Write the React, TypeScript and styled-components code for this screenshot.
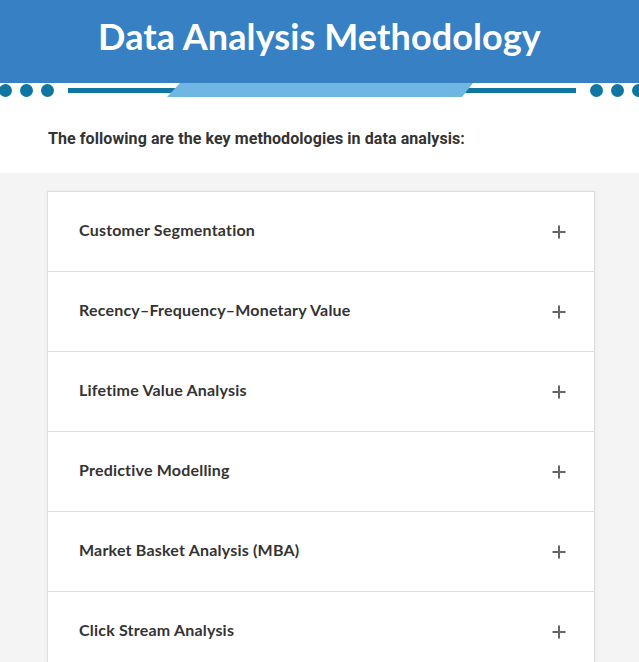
import * as React from "react";
import styled, { createGlobalStyle } from "styled-components";

const GlobalStyle = createGlobalStyle`
  html, body {
    margin: 0;
    padding: 0;
    background: #f4f4f4;
  }
  * {
    box-sizing: border-box;
  }
`;

const items = [
  "Customer Segmentation",
  "Recency–Frequency–Monetary Value",
  "Lifetime Value Analysis",
  "Predictive Modelling",
  "Market Basket Analysis (MBA)",
  "Click Stream Analysis",
];

const Page = styled.div`
  width: 639px;
  min-height: 662px;
  background: #f4f4f4;
  overflow: hidden;
`;

const Intro = styled.section`
  background: #ffffff;
`;

const Banner = styled.header`
  height: 83px;
  background: #3680c3;
  display: flex;
  justify-content: center;
  align-items: flex-start;
  padding-top: 11px;
`;

const Title = styled.h1`
  margin: 0;
  font-family: Lato, "Open Sans", sans-serif;
  font-weight: 700;
  font-size: 36px;
  line-height: 50px;
  color: #ffffff;
  letter-spacing: 0.1px;
`;

const Divider = styled.div`
  height: 14px;
  display: flex;
  align-items: center;
  position: relative;
`;

const Dots = styled.div<{ $side: "left" | "right" }>`
  display: flex;
  gap: 8px;
  flex-shrink: 0;
  margin-left: ${({ $side }) => ($side === "left" ? "-1px" : "14px")};
  margin-right: ${({ $side }) => ($side === "left" ? "14px" : "-6px")};
`;

const Dot = styled.span`
  width: 13px;
  height: 13px;
  border-radius: 50%;
  background: #0e76a0;
  display: block;
`;

const Rule = styled.div`
  flex: 1;
  height: 5px;
  background: #0e76a0;
`;

const Tab = styled.div`
  position: absolute;
  top: 0;
  left: 167px;
  width: 306px;
  height: 14px;
  background: #70b6e2;
  clip-path: polygon(13px 0, 100% 0, calc(100% - 11px) 100%, 0 100%);
`;

const Lead = styled.p`
  margin: 0;
  padding: 32px 48px 24px;
  font-family: Roboto, "Liberation Sans", sans-serif;
  font-weight: 700;
  font-size: 16px;
  line-height: 20px;
  letter-spacing: 0.08px;
  color: #333333;
  height: 76px;
`;

const Body = styled.main`
  padding: 18px 44px 0 47px;
`;

const Accordion = styled.div`
  background: #ffffff;
  border: 1px solid #dedede;
  box-shadow: 0 0 4px rgba(0, 0, 0, 0.05);
`;

const Row = styled.div`
  height: 80px;
  display: flex;
  align-items: center;
  justify-content: space-between;
  padding: 0 28px 4px 31px;
  border-top: 1px solid #dedede;

  &:first-child {
    border-top: none;
    height: 79px;
  }
`;

const RowTitle = styled.span`
  font-family: Lato, "Open Sans", sans-serif;
  font-weight: 700;
  font-size: 16px;
  letter-spacing: 0.2px;
  color: #333333;
`;

const Plus = () => (
  <svg width="14" height="14" viewBox="0 0 14 14" aria-hidden style={{ marginTop: 4 }}>
    <path d="M7 0.5v13M0.5 7h13" stroke="#666666" strokeWidth="2" fill="none" />
  </svg>
);

export default function App() {
  return (
    <Page>
      <GlobalStyle />
      <Intro>
        <Banner>
          <Title>Data Analysis Methodology</Title>
        </Banner>
        <Divider>
          <Dots $side="left">
            <Dot />
            <Dot />
            <Dot />
          </Dots>
          <Rule />
          <Dots $side="right">
            <Dot />
            <Dot />
            <Dot />
          </Dots>
          <Tab />
        </Divider>
        <Lead>The following are the key methodologies in data analysis:</Lead>
      </Intro>
      <Body>
        <Accordion>
          {items.map((item) => (
            <Row key={item}>
              <RowTitle>{item}</RowTitle>
              <Plus />
            </Row>
          ))}
        </Accordion>
      </Body>
    </Page>
  );
}
